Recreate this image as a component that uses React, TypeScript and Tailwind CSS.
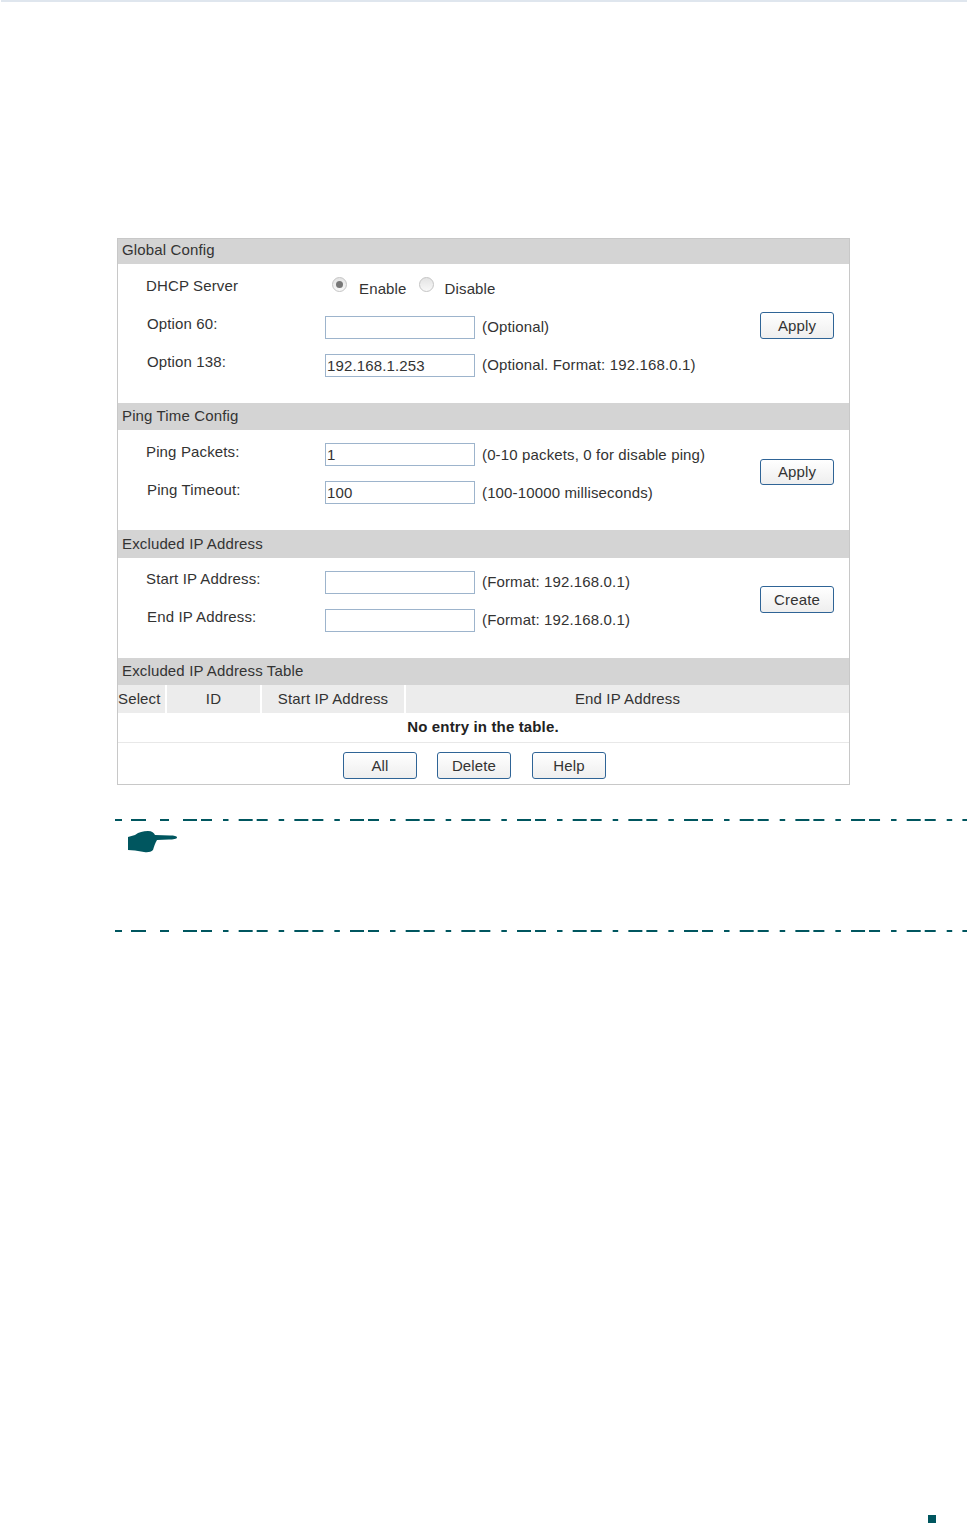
import React from 'react';

const Btn = ({ children, className = 'h-[27px] leading-[25px]' }: { children: React.ReactNode; className?: string }) => (
  <button className={`w-[74px] shrink-0 rounded-[3px] border border-[#2f6496] bg-gradient-to-b from-white to-[#eeeeee] text-[15px] text-[#333] ${className}`}>
    {children}
  </button>
);

const Header = ({ title, className = '' }: { title: string; className?: string }) => (
  <div className={`bg-[#d4d4d4] pl-1 text-[15px] text-[#333] flex items-center ${className}`}>{title}</div>
);

const Row = ({ label, value, hint, indent, tight }: { label: string; value?: string; hint: string; indent?: boolean; tight?: boolean }) => (
  <div className="flex h-[38px]">
    <div className={`text-[15px] leading-5 mt-2 w-[207px] ${indent ? 'pl-[29px]' : 'pl-[28px]'}`}>{label}</div>
    <div className={`w-[150px] h-[23px] border border-[#9db4cc] bg-white pl-[1px] text-[15px] leading-[21px] ${tight ? 'mt-[9px]' : 'mt-[10px]'}`}>{value}</div>
    <div className="ml-[7px] text-[15px] leading-5 mt-[11px]">{hint}</div>
  </div>
);

const Radio = ({ checked }: { checked?: boolean }) => (
  <span className="w-[15px] h-[15px] rounded-full border border-[#c4c4c4] bg-gradient-to-b from-[#e4e4e4] to-[#f8f8f8] flex items-center justify-center shrink-0">
    {checked && <span className="w-[7px] h-[7px] rounded-full bg-[#777]" />}
  </span>
);

const Dashes = () => (
  <svg width="852" height="2" className="block ml-[115px]">
    <g stroke="#00565f" strokeWidth="2" fill="none">
      <path d="M0 1H7M16 1H31M45 1H54" />
      <line x1="68" y1="1" x2="852" y2="1" strokeDasharray="14 4 11 11 5.500 10.170" />
    </g>
  </svg>
);

export default function App() {
  return (
    <div className="w-[967px] h-[1525px] bg-white overflow-hidden text-[#333] tracking-[0.14px] font-['Liberation_Sans',Arial,sans-serif]">
      <div className="h-[2px] ml-px bg-[#dfe6ee]" />
      <div className="ml-[117px] mt-[236px] w-[733px] h-[547px] border border-[#c8c8c8]">
        {/* Global Config */}
        <Header title="Global Config" className="h-[25px] pb-[2px]" />
        <div className="h-[139px] flex justify-between pr-[15px] pt-1">
          <div>
            <div className="flex h-[38px]">
              <div className="text-[15px] leading-5 mt-2 pl-[28px] w-[214px]">DHCP Server</div>
              <div className="mt-[9px]"><Radio checked /></div>
              <div className="ml-3 mt-[11px] text-[15px] leading-5">Enable</div>
              <div className="ml-3 mt-[9px]"><Radio /></div>
              <div className="ml-[11px] mt-[11px] text-[15px] leading-5">Disable</div>
            </div>
            <Row label="Option 60:" hint="(Optional)" indent />
            <Row label="Option 138:" value="192.168.1.253" hint="(Optional. Format: 192.168.0.1)" indent />
          </div>
          <Btn className="mt-[44px] h-[27px] leading-[25px]">Apply</Btn>
        </div>

        {/* Ping Time Config */}
        <Header title="Ping Time Config" className="h-[27px]" />
        <div className="h-[100px] flex justify-between pr-[15px] pt-1">
          <div>
            <Row label="Ping Packets:" value="1" hint="(0-10 packets, 0 for disable ping)" tight />
            <Row label="Ping Timeout:" value="100" hint="(100-10000 milliseconds)" indent tight />
          </div>
          <Btn className="mt-[25px] h-[26px] leading-[24px]">Apply</Btn>
        </div>

        {/* Excluded IP Address */}
        <Header title="Excluded IP Address" className="h-[28px]" />
        <div className="h-[100px] flex justify-between pr-[15px] pt-[3px]">
          <div>
            <Row label="Start IP Address:" hint="(Format: 192.168.0.1)" />
            <Row label="End IP Address:" hint="(Format: 192.168.0.1)" indent />
          </div>
          <Btn className="mt-[25px] h-[27px] leading-[25px]">Create</Btn>
        </div>

        {/* Excluded IP Address Table */}
        <Header title="Excluded IP Address Table" className="h-[27px]" />
        <div className="flex gap-[2px] h-[28px] text-[15px] leading-[28px] text-center">
          <div className="w-[47px] bg-[#ececec] text-left">Select</div>
          <div className="w-[93px] bg-[#ececec]">ID</div>
          <div className="w-[142px] bg-[#ececec]">Start IP Address</div>
          <div className="flex-1 bg-[#ececec]">End IP Address</div>
        </div>
        <div className="h-[30px] border-b border-[#e8e8e8] text-center text-[15px] font-bold leading-[28px] text-[#222] pr-px">No entry in the table.</div>
        <div className="flex gap-5 pt-[9px] pl-[225px]">
          <Btn>All</Btn>
          <Btn>Delete</Btn>
          <Btn className="ml-px h-[27px] leading-[25px]">Help</Btn>
        </div>
      </div>

      {/* Note block */}
      <div className="mt-[34px]">
        <Dashes />
        <svg width="50" height="23" viewBox="0 0 50 23" className="block ml-[128px] mt-[9px]">
          <path d="M0 7L7 5C11 2 15 1 20 1C24 1 26 3 27 5L42 5.500C46 5.500 49 6 49 7.500C49 9 45 9.500 41 9.500L29 10C27 13 26 17 25 20C23 22 20 22.500 16 22L7 20.500L0 20Z" fill="#00565f" />
        </svg>
        <div className="mt-[77px]"><Dashes /></div>
      </div>

      <div className="w-2 h-2 bg-[#00565f] ml-[928px] mt-[583px]" />
    </div>
  );
}
